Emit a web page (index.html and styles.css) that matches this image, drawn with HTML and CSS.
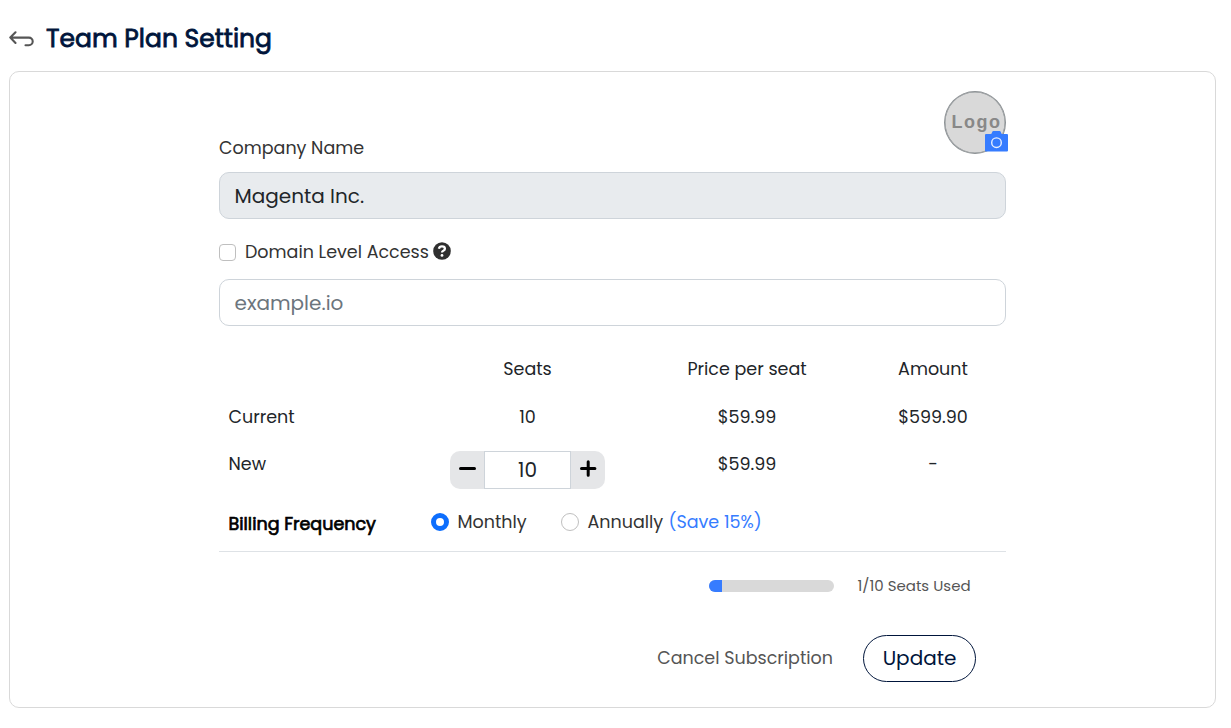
FILE: index.html
```html
<!DOCTYPE html>
<html lang="en">
<head>
<meta charset="utf-8">
<title>Team Plan Setting</title>
<link rel="stylesheet" href="styles.css">
</head>
<body>
<header class="page-header">
  <svg class="back" width="27" height="18" viewBox="0 0 27 18" fill="none" stroke="#555" stroke-width="2.1" stroke-linecap="round" stroke-linejoin="round"><path d="M6.5 2.3 1.3 7.6l5.2 5.3M1.5 7.6h18.4a3.8 3.8 0 0 1 0 7.6h-3.4"/></svg>
  <h1 class="title">Team Plan Setting</h1>
</header>
<main class="card">
  <form class="form">
    <div class="top-row">
      <label class="label">Company Name</label>
      <div class="logo"><span class="logo-text">Logo</span>
        <svg class="camera" width="23" height="21" viewBox="0 0 23 21"><path fill="#367cff" d="M1 3h4.8q.8 0 1-.9L7.2.9Q7.5 0 8.4 0h6.2q.9 0 1.2.9l.4 1.2q.2.9 1 .9H22q1 0 1 1v15.5q0 1-1 1H1q-1 0-1-1V4q0-1 1-1z"/><circle cx="11.5" cy="11.7" r="4.8" fill="none" stroke="#e8efff" stroke-width="1.4"/></svg>
      </div>
    </div>
    <div class="field filled">Magenta Inc.</div>
    <div class="domain-row">
      <span class="checkbox"></span>
      <span>Domain Level Access</span>
      <svg class="help" width="18" height="18" viewBox="0 0 18 18"><circle cx="9" cy="9" r="8.8" fill="#2f2f2f"/><path d="M5.9 6.8Q6.3 4.4 9 4.4q2.9 0 2.9 2.3 0 1.3-1.6 2.1-1.3.6-1.3 1.7" fill="none" stroke="#fff" stroke-width="2.3"/><circle cx="9" cy="13.4" r="1.4" fill="#fff"/></svg>
    </div>
    <div class="field placeholder">example.io</div>
    <div class="grid">
      <span></span><span class="c">Seats</span><span class="c">Price per seat</span><span class="c">Amount</span>
      <span>Current</span><span class="c">10</span><span class="c">$59.99</span><span class="c">$599.90</span>
      <span>New</span>
      <div class="stepper">
        <span class="step"><svg width="17" height="17" viewBox="0 0 17 17"><path d="M1.5 8.5h14" stroke="#000" stroke-width="3" stroke-linecap="round"/></svg></span>
        <span class="count">10</span>
        <span class="step"><svg width="17" height="17" viewBox="0 0 17 17"><path d="M1.5 8.5h13.4M8.2 1.8v13.4" stroke="#000" stroke-width="3" stroke-linecap="round"/></svg></span>
      </div>
      <span class="c">$59.99</span><span class="c">-</span>
    </div>
    <div class="billing">
      <strong class="billing-title">Billing Frequency</strong>
      <span class="radio checked"></span><span class="monthly">Monthly</span>
      <span class="radio"></span><span class="annually">Annually</span><span class="save">(Save 15%)</span>
    </div>
    <div class="usage">
      <div class="bar"><div class="bar-fill" style="width:10%"></div></div>
      <span class="used">1/10 Seats Used</span>
    </div>
    <div class="actions">
      <span class="cancel">Cancel Subscription</span>
      <button class="update" type="button">Update</button>
    </div>
  </form>
</main>
</body>
</html>
```
FILE: styles.css
```css
* { box-sizing: border-box; }
body { margin: 0; background: #fff; color: #212529; font-family: Poppins, Inter, sans-serif; font-size: 17.5px; line-height: 27px; white-space: nowrap; }
.page-header { display: flex; align-items: center; height: 71px; padding: 7px 0 0 8.5px; }
.back { margin-right: 10.5px; }
.title { margin: 0; padding-bottom: 1px; font-size: 25px; line-height: 38px; font-weight: 400; color: #00153b; -webkit-text-stroke: 0.8px #00153b; }
.card { width: 1207px; height: 637px; margin-left: 9px; border: 1px solid #d9d9d9; border-radius: 10px; }
.form { width: 787px; margin: 0 auto; padding-top: 19px; }
.top-row { display: flex; justify-content: space-between; height: 81px; }
.label { margin-top: 44px; color: #333; }
.logo { position: relative; display: flex; align-items: center; justify-content: center; width: 62px; height: 63px; border: 1.5px solid #8d9295; box-shadow: inset 0 0 0 0.5px #8d9295; border-radius: 50%; background: #d9d9d9; }
.logo-text { font: bold 18px/24px "Liberation Sans", sans-serif; letter-spacing: 1.5px; color: #888; margin: 0 -3px 2px 0; }
.camera { position: absolute; right: -3px; bottom: 1px; }
.field { display: flex; align-items: center; height: 47px; padding: 1px 14.5px 0; border: 1px solid #ced4da; border-radius: 10px; font-size: 20px; }
.filled { background: #e8ebee; }
.placeholder { color: #6c757d; }
.domain-row { display: flex; align-items: center; height: 60px; padding-top: 6px; color: #333; }
.checkbox { width: 17px; height: 17px; margin: 1px 9px 0 0; border: 1px solid #bfbfbf; border-radius: 4px; }
.help { margin: -2px 0 0 4.5px; }
.grid { display: grid; grid-template-columns: 199px 219px 220px 149px; grid-template-rows: 48px 47px 49px; margin-top: 30px; height: 144px; }
.grid > :nth-child(4n + 1) { padding-left: 9.5px; }
.grid > :nth-child(4n + 4) { padding-left: 3px; }
.c { text-align: center; }
.stepper { display: flex; justify-self: center; width: 155px; height: 38px; border-radius: 10px; background: #e5e6e8; }
.step { display: flex; align-items: center; justify-content: center; flex: 1; padding-bottom: 3px; }
.count { display: flex; align-items: center; justify-content: center; width: 87px; border: 1px solid #ced4da; background: #fff; font-size: 20px; }
.billing { display: flex; align-items: center; height: 52px; padding: 0 0 7px 9.5px; border-bottom: 1px solid #dee2e6; color: #333; }
.billing-title { width: 202.5px; padding-top: 4px; font-weight: 400; color: #000; -webkit-text-stroke: 0.7px #000; }
.radio { width: 18px; height: 18px; border: 1px solid #bfbfbf; border-radius: 50%; }
.checked { border: 5px solid #0d6efd; }
.monthly { width: 112px; padding-left: 8.5px; }
.annually { width: 89.5px; padding-left: 8.5px; }
.save { color: #367cff; }
.usage { display: flex; align-items: center; justify-content: flex-end; height: 68px; padding-right: 35px; }
.bar { width: 125px; height: 12px; margin-right: 23px; border-radius: 6px; overflow: hidden; background: #d9d9d9; }
.bar-fill { height: 100%; background: #367cff; }
.used { width: 114px; padding: 0 0 1px 0.5px; font-size: 15px; color: #555; }
.actions { display: flex; align-items: center; justify-content: flex-end; gap: 30px; height: 77px; padding-right: 30px; }
.cancel { color: #555; }
.update { width: 113px; height: 47px; padding: 0 0 2px; border: 1px solid #00153b; border-radius: 24px; background: #fff; color: #00153b; font: 20px/30px Poppins, Inter, sans-serif; }
```
